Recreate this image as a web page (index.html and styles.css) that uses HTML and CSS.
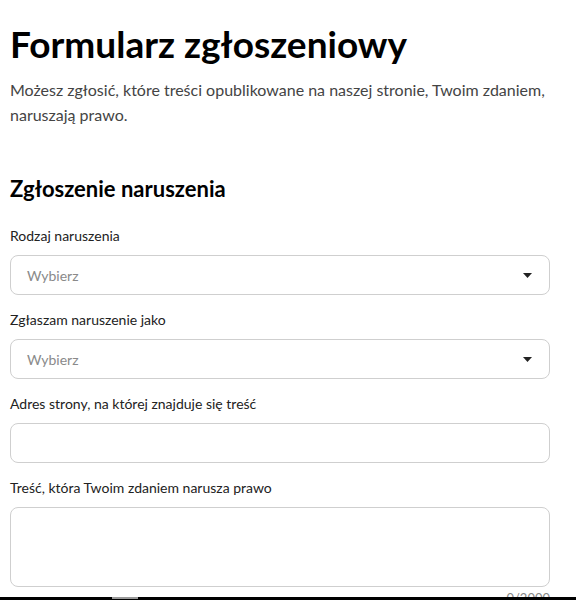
FILE: index.html
```html
<!DOCTYPE html>
<html lang="pl">
<head>
<meta charset="utf-8">
<title>Formularz zgłoszeniowy</title>
<link rel="stylesheet" href="styles.css">
</head>
<body>
<main class="page">
  <h1 class="title">Formularz zgłoszeniowy</h1>
  <p class="lead">Możesz zgłosić, które treści opublikowane na naszej stronie, Twoim zdaniem, naruszają prawo.</p>

  <h2 class="section-title">Zgłoszenie naruszenia</h2>

  <form class="form">
    <div class="field">
      <label class="label">Rodzaj naruszenia</label>
      <div class="select">
        <span class="placeholder">Wybierz</span>
        <svg class="caret" width="9" height="5" viewBox="0 0 9 5"><path d="M0 0H9L4.5 5Z" fill="#222"/></svg>
      </div>
    </div>
    <div class="field">
      <label class="label">Zgłaszam naruszenie jako</label>
      <div class="select">
        <span class="placeholder">Wybierz</span>
        <svg class="caret" width="9" height="5" viewBox="0 0 9 5"><path d="M0 0H9L4.5 5Z" fill="#222"/></svg>
      </div>
    </div>
    <div class="field">
      <label class="label">Adres strony, na której znajduje się treść</label>
      <div class="input"></div>
    </div>
    <div class="field">
      <label class="label">Treść, która Twoim zdaniem narusza prawo</label>
      <div class="textarea"></div>
      <div class="counter">0/2000</div>
    </div>
  </form>
</main>
<div class="bottom-bar"><span class="bottom-tab"></span></div>
</body>
</html>
```
FILE: styles.css
```css
* { box-sizing: border-box; }
html, body { margin: 0; padding: 0; background: #fff; }
body { font-family: Lato, "Open Sans", sans-serif; color: #111; }

.page {
  max-width: 560px;
  padding: 0 10px;
}

.title {
  margin: 20px 0 0;
  font-size: 37px;
  line-height: 48px;
  font-weight: 700;
  color: #000;
}

.lead {
  margin: 9px 0 0;
  font-size: 16px;
  line-height: 25px;
  color: #444;
}

.section-title {
  margin: 47px 0 0;
  font-size: 22px;
  line-height: 30px;
  font-weight: 700;
  color: #000;
}

.form {
  margin-top: 22px;
  display: flex;
  flex-direction: column;
  gap: 15px;
}

.field {
  display: flex;
  flex-direction: column;
  gap: 10px;
}

.label {
  font-size: 14px;
  line-height: 19px;
  color: #222;
}

.select, .input, .textarea {
  border: 1px solid #cfcfcf;
  border-radius: 8px;
  height: 40px;
  background: #fff;
}

.select {
  display: flex;
  align-items: center;
  justify-content: space-between;
  padding: 0 17px 0 16px;
}

.placeholder {
  font-size: 14px;
  color: #8a8a8a;
}

.caret { display: block; }

.textarea { height: 80px; }

.counter {
  margin-top: -7px;
  text-align: right;
  font-size: 13px;
  color: #888;
}

.bottom-bar {
  position: fixed;
  left: 0;
  right: 0;
  bottom: 0;
  height: 3px;
  background: #000;
}

.bottom-tab {
  position: absolute;
  left: 112px;
  top: 0;
  width: 26px;
  height: 2px;
  background: #9a9a9a;
}
```
